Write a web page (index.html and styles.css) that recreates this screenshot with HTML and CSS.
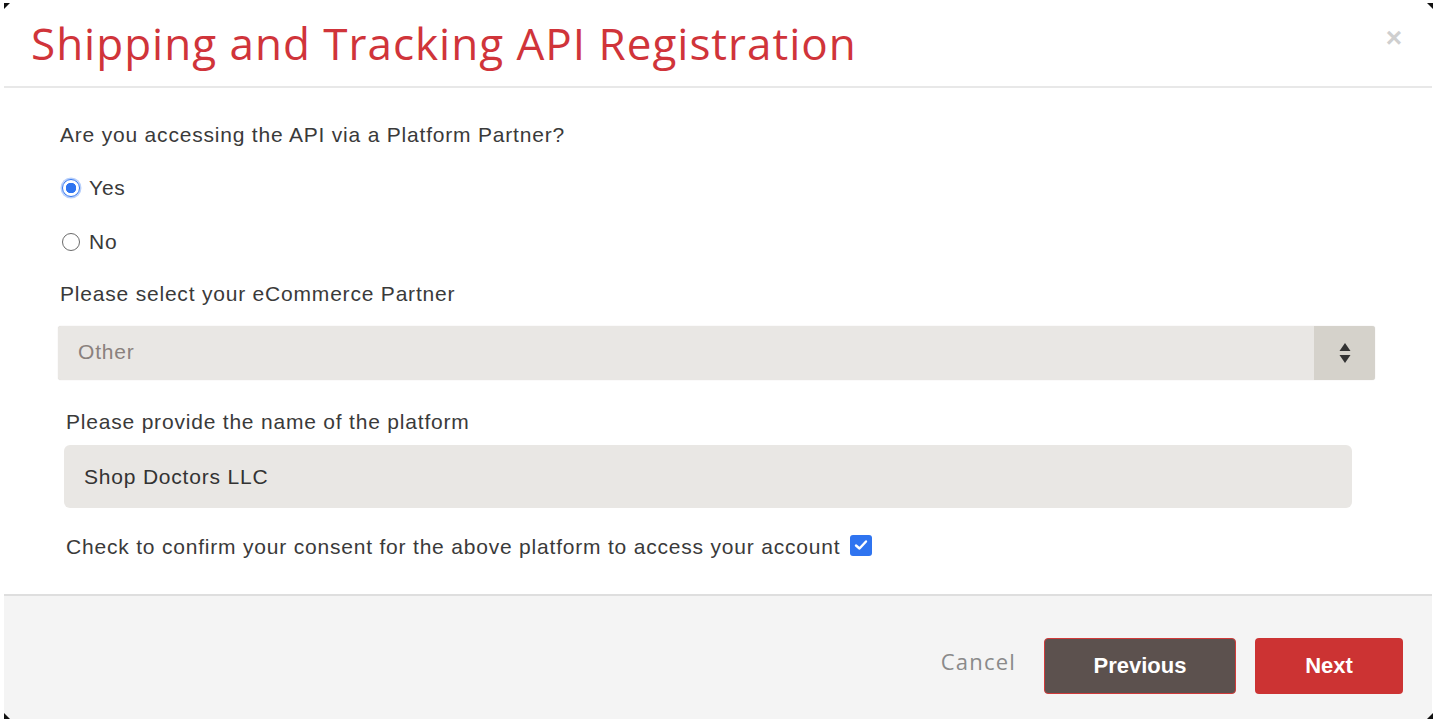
FILE: index.html
```html
<html>

<head>
    <meta charset="UTF-8">
    <meta name="viewport" content="width=device-width, initial-scale=1.0">
    <link rel="stylesheet" href="styles.css">
</head>

<body>
    <span class="mark tl"></span><span class="mark tr"></span><span class="mark bl"></span><span class="mark br"></span>
    <div class="modal">
        <div class="head">
            <h1>Shipping and Tracking API Registration</h1>
            <span class="close">&times;</span>
        </div>
        <div class="body">
            <p class="label">Are you accessing the API via a Platform Partner?</p>
            <label class="radio yes"><span class="dot on"></span>Yes</label>
            <label class="radio no"><span class="dot"></span>No</label>
            <p class="label partner">Please select your eCommerce Partner</p>
            <div class="select">
                <span class="value">Other</span>
                <span class="arrows"><svg width="12" height="22" viewBox="0 0 12 22"><path d="M6 1 L11.5 9 L0.5 9 Z" fill="#333"/><path d="M0.5 13 L11.5 13 L6 21 Z" fill="#333"/></svg></span>
            </div>
            <div class="group">
                <p class="label">Please provide the name of the platform</p>
                <div class="input">Shop Doctors LLC</div>
                <p class="label consent">Check to confirm your consent for the above platform to access your account
                    <span class="check"><svg width="14" height="12" viewBox="0 0 14 12"><path d="M2 6.5 L5.5 9.5 L12 2.5" fill="none" stroke="#fff" stroke-width="2.4" stroke-linecap="round" stroke-linejoin="round"/></svg></span></p>
            </div>
        </div>
        <div class="foot">
            <span class="cancel">Cancel</span>
            <button class="prev">Previous</button>
            <button class="next">Next</button>
        </div>
    </div>
</body>

</html>
```

FILE: styles.css
```css
body {
    margin: 0;
    background: #fff;
    font-family: "Liberation Sans", Arial, sans-serif;
    color: #3a3a3a;
}
.modal {
    margin: 0 7px 0 4px;
    height: 719px;
    display: flex;
    flex-direction: column;
}
.head {
    height: 86px;
    border-bottom: 2px solid #e8e8e8;
    display: flex;
    align-items: flex-start;
    justify-content: space-between;
}
h1 {
    margin: 13px 0 0 27px;
    font-family: "Open Sans", sans-serif;
    font-weight: 400;
    font-size: 44px;
    letter-spacing: 1px;
    color: #d0343a;
}
.close {
    margin: 22px 30px 0 0;
    font-size: 28px;
    color: #cfcfcf;
    font-weight: bold;
}
.body {
    flex: 1;
    padding: 35px 57px 0 54px;
}
.label {
    margin: 0;
    padding-left: 2px;
    font-size: 21px;
    line-height: 24px;
    letter-spacing: 0.8px;
}
.radio {
    display: flex;
    align-items: center;
    height: 24px;
    font-size: 21px;
    letter-spacing: 0.8px;
    padding-left: 4px;
}
.yes {
    margin-top: 29px;
}
.no {
    margin-top: 30px;
}
.dot {
    width: 16px;
    height: 16px;
    border: 1.5px solid #6b6b6b;
    border-radius: 50%;
    margin-right: 9px;
    background: #fff;
}
.dot.on {
    border-color: #2f74f0;
    background: radial-gradient(circle, #2f74f0 0 5px, #fff 5.5px);
    box-shadow: 0 0 0 1.5px #b9d0fb;
}
.partner {
    margin-top: 28px;
}
.select {
    margin-top: 20px;
    height: 54px;
    display: flex;
    background: #e9e7e4;
    border-radius: 3px;
    box-shadow: 0 0 1px #cfccc6;
}
.value {
    flex: 1;
    padding-left: 20px;
    line-height: 52px;
    font-size: 21px;
    letter-spacing: 0.8px;
    color: #8a817d;
}
.arrows {
    width: 61px;
    background: #d5d2cb;
    display: flex;
    align-items: center;
    justify-content: center;
    border-radius: 0 3px 3px 0;
}
.group {
    margin: 30px 23px 0 6px;
}
.input {
    margin-top: 11px;
    height: 63px;
    line-height: 63px;
    background: #e9e7e4;
    border-radius: 6px;
    padding-left: 20px;
    font-size: 21px;
    letter-spacing: 0.8px;
    color: #333;
}
.consent {
    margin-top: 27px;
    display: flex;
    align-items: center;
}
.check {
    width: 22px;
    height: 21px;
    margin-left: 10px;
    margin-top: -4px;
    background: #2f74f0;
    border-radius: 3px;
    display: inline-flex;
    align-items: center;
    justify-content: center;
}
.foot {
    height: 125px;
    border-top: 2px solid #dedede;
    background: #f4f4f4;
    display: flex;
    justify-content: flex-end;
    align-items: flex-start;
    padding: 42px 29px 0 0;
    box-sizing: border-box;
}
.cancel {
    margin: 8px 28px 0 0;
    font-family: "Open Sans", sans-serif;
    font-size: 22px;
    letter-spacing: 1.2px;
    color: #8a8a8a;
}
button {
    height: 56px;
    border-radius: 4px;
    font-family: "Liberation Sans", Arial, sans-serif;
    font-weight: bold;
    font-size: 22px;
    color: #fff;
}
.prev {
    width: 192px;
    background: #5c514e;
    border: 1.5px solid #d03a3a;
    margin-right: 19px;
}
.next {
    width: 148px;
    background: #cc3333;
    border: none;
}
.mark {
    position: absolute;
    width: 0;
    height: 0;
    border: 3px solid transparent;
}
.tl { left: 4px; top: 3px; border-top-color: #111; border-left-color: #111; }
.tr { left: 1427px; top: 3px; border-top-color: #111; border-right-color: #111; }
.bl { left: 4px; top: 713px; border-bottom-color: #111; border-left-color: #111; }
.br { left: 1427px; top: 713px; border-bottom-color: #111; border-right-color: #111; }
```
